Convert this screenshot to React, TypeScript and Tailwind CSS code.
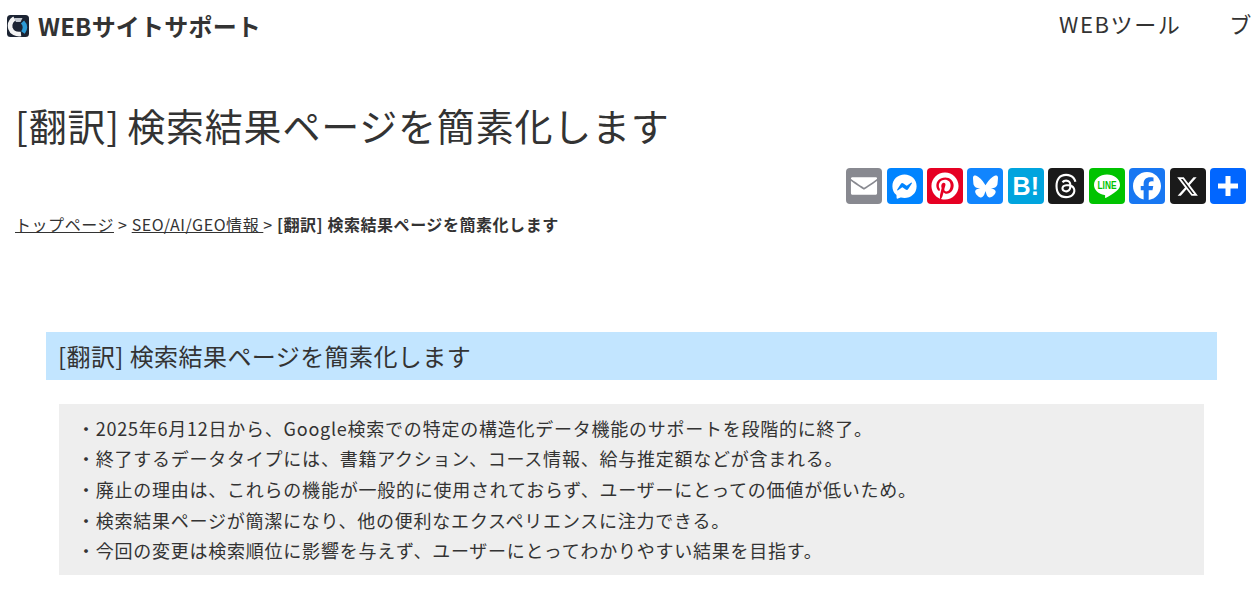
import React from "react";
import { FaFacebook, FaPinterest, FaBluesky, FaThreads, FaXTwitter, FaFacebookMessenger } from "react-icons/fa6";

function Sq({ bg, children }: { bg: string; children: React.ReactNode }) {
  return <a className={`w-9 h-9 rounded-[4px] flex items-center justify-center text-white ${bg}`}>{children}</a>;
}

const items = [
  "2025年6月12日から、Google検索での特定の構造化データ機能のサポートを段階的に終了。",
  "終了するデータタイプには、書籍アクション、コース情報、給与推定額などが含まれる。",
  "廃止の理由は、これらの機能が一般的に使用されておらず、ユーザーにとっての価値が低いため。",
  "検索結果ページが簡潔になり、他の便利なエクスペリエンスに注力できる。",
  "今回の変更は検索順位に影響を与えず、ユーザーにとってわかりやすい結果を目指す。",
];

export default function App() {
  return (
    <div className="w-[1254px] h-[594px] overflow-hidden bg-white text-[#333] font-['Noto_Sans_CJK_JP',sans-serif]">
      <header className="h-[52px] flex items-center justify-between pl-[6px]">
        <div className="flex items-center gap-[8px]">
          <svg width="24" height="24" viewBox="0 0 24 24">
            <rect x="1" y="1" width="22" height="22" rx="3.5" fill="#1c2433" />
            <path d="M8.5 4.5 C4.5 7 3.5 11 4.5 14.5 C5.8 18.6 10 20.6 15 20" fill="none" stroke="#f4f4f4" strokeWidth="4.6" />
            <path d="M8 4 L16.5 4 L14.5 8 L10 8 Z" fill="#c4c9d1" />
            <path d="M16.5 8 C19.5 11 19.5 15 17 18.5" fill="none" stroke="#2b9ad6" strokeWidth="4.4" />
          </svg>
          <span className="text-[24px] font-bold tracking-[0.2px] leading-none">WEBサイトサポート</span>
        </div>
        <nav className="flex gap-[48px] text-[22px] tracking-[1.6px] whitespace-nowrap w-[195px] overflow-hidden shrink-0 -translate-y-[3px]">
          <span>WEBツール</span>
          <span>ブログ</span>
        </nav>
      </header>
      <h1 className="pl-[15px] mt-[44px] text-[38px] leading-[58px] font-normal tracking-[0.8px] [word-spacing:-2px]">[翻訳] 検索結果ページを簡素化します</h1>
      <div className="flex justify-end gap-[4.44px] pr-[8px] mt-[14px]">
        <Sq bg="bg-[#888990]">
          <svg width="38" height="38" viewBox="0 0 32 32" fill="#fff" className="shrink-0"><path d="M27 21.775v-9.9s-10.01 6.985-10.982 7.348C15.058 18.878 5 11.875 5 11.875v9.9c0 1.375.293 1.65 1.65 1.65h18.7c1.393 0 1.65-.242 1.65-1.65m-.017-11.841c0-1.002-.291-1.359-1.633-1.359H6.65c-1.38 0-1.65.429-1.65 1.43l.016.154s9.939 6.842 11 7.216C17.14 16.941 26.983 10 26.983 10z"/></svg>
        </Sq>
        <Sq bg="bg-[#0084ff]"><FaFacebookMessenger size={25} /></Sq>
        <Sq bg="bg-[#e60023]"><FaPinterest size={28} /></Sq>
        <Sq bg="bg-[#1185fe]"><FaBluesky size={25} /></Sq>
        <Sq bg="bg-[#00a4de]"><span className="font-['Liberation_Sans'] font-bold text-[25px] leading-none">B!</span></Sq>
        <Sq bg="bg-[#1a1a1a]"><FaThreads size={26} /></Sq>
        <Sq bg="bg-[#00c300]">
          <svg width="30" height="30" viewBox="0 0 30 30">
            <path d="M15 3.5 C8 3.5 2 8 2 14 C2 19 6.5 23 12.5 23.9 C13.5 24.2 13.2 25 13 26 C12.9 27 13.6 27.2 14.6 26.6 C17.5 25 21 22.6 24.5 20 C27 18 28 16 28 14 C28 8 22 3.5 15 3.5 Z" fill="#fff"/>
            <text x="15" y="18" textAnchor="middle" fontSize="10.5" fontWeight="700" fill="#00c300" fontFamily="Liberation Sans, sans-serif" textLength="19" lengthAdjust="spacingAndGlyphs">LINE</text>
          </svg>
        </Sq>
        <Sq bg="bg-[#1877f2]"><FaFacebook size={28} /></Sq>
        <Sq bg="bg-[#1a1a1a]"><FaXTwitter size={23} /></Sq>
        <Sq bg="bg-[#0166ff]">
          <svg width="26" height="26" viewBox="0 0 26 26" fill="#fff"><path d="M10.5 3h5v7.5H23v5h-7.5V23h-5v-7.5H3v-5h7.5z"/></svg>
        </Sq>
      </div>
      <div className="pl-[15px] mt-[8px] text-[16px] leading-[24px] tracking-[0.55px] whitespace-nowrap">
        <a className="underline">トップページ</a> &gt; <a className="underline">SEO/AI/GEO情報 </a>&gt; <span className="font-bold">[翻訳] 検索結果ページを簡素化します</span>
      </div>
      <main className="px-[46px] pt-[96px] w-[1263px]">
        <h2 className="bg-[#c2e5ff] h-[48px] pl-[12px] pb-[1px] flex items-center text-[24px] font-normal tracking-[0.42px]">[翻訳] 検索結果ページを簡素化します</h2>
        <ul className="mx-[13px] mt-[24px] bg-[#eeeeee] pl-[18px] pt-[8.8px] pb-[9.2px] text-[18px] leading-[30.6px] tracking-[0.76px]">
          {items.map((t) => (
            <li key={t} className="flex">
              <span>・</span>
              <span>{t}</span>
            </li>
          ))}
        </ul>
      </main>
    </div>
  );
}
